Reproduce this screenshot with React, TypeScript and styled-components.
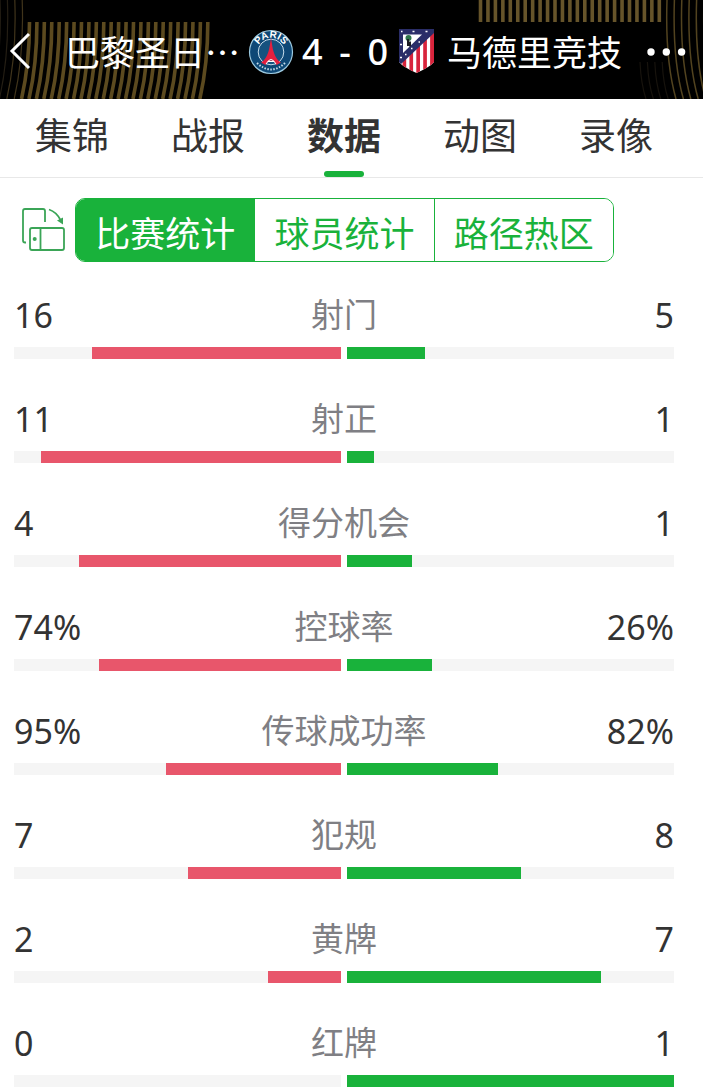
import React from 'react';
import styled, { createGlobalStyle } from 'styled-components';

const GREEN = '#19b23b';
const RED = '#e8566b';

const GlobalStyle = createGlobalStyle`
  *, *::before, *::after { box-sizing: border-box; }
  body {
    margin: 0;
    background: #fff;
    color: #333;
    font-family: "Noto Sans", "Noto Sans CJK SC", sans-serif;
  }
  button { font-family: inherit; cursor: pointer; }
`;

const Page = styled.div`
  width: 100%;
  overflow-x: hidden;
`;

const Header = styled.header`
  position: relative;
  display: flex;
  align-items: center;
  height: 99px;
  padding: 4px 14px 0 8px;
  background: #000;
  color: #fff;
`;

const Backdrop = styled.svg`
  position: absolute;
  inset: 0;
  width: 100%;
  height: 100%;
`;

const IconButton = styled.button`
  position: relative;
  display: flex;
  padding: 0;
  border: 0;
  background: none;
  color: inherit;
`;

const Match = styled.div`
  position: relative;
  flex: 1;
  display: flex;
  align-items: center;
  justify-content: center;
  gap: 8px;
  padding-left: 8px;
`;

const Team = styled.span<{ $away?: boolean }>`
  padding: 0 0 2px ${(p) => (p.$away ? '4px' : '0')};
  font: 400 35px/48px "Noto Sans CJK SC", sans-serif;
  white-space: nowrap;
`;

const Score = styled.strong`
  display: flex;
  justify-content: space-between;
  width: 88px;
  padding-right: 2px;
  font-size: 36px;
  line-height: 48px;
  font-weight: 500;
`;

const Tabs = styled.nav`
  display: flex;
  height: 79px;
  padding: 0 19px 0 4px;
  border-bottom: 1px solid #e8e8e8;
`;

const Tab = styled.button<{ $active?: boolean }>`
  flex: 1;
  display: flex;
  flex-direction: column;
  align-items: center;
  justify-content: space-between;
  padding: 10px 0 0;
  border: 0;
  background: none;
  color: #333;
  font-size: 37px;
  line-height: 54px;
  font-weight: ${(p) => (p.$active ? 700 : 400)};
  white-space: nowrap;

  &::after {
    content: "";
    width: 40px;
    height: 6px;
    border-radius: 3px;
    background: ${(p) => (p.$active ? GREEN : 'transparent')};
  }
`;

const Filter = styled.div`
  display: flex;
  align-items: center;
  gap: 9px;
  padding: 20px 29px 30px 21px;
`;

const Segments = styled.div`
  flex: 0 1 539px;
  display: flex;
  height: 64px;
  border: 1px solid ${GREEN};
  border-radius: 10px;
  overflow: hidden;
`;

const Segment = styled.button<{ $active?: boolean }>`
  flex: 1;
  padding: 8px 0 0;
  border: 0;
  background: ${(p) => (p.$active ? GREEN : '#fff')};
  color: ${(p) => (p.$active ? '#fff' : GREEN)};
  font-size: 35px;
  line-height: 48px;
  white-space: nowrap;

  & + & { border-left: 1px solid ${GREEN}; }
`;

const Stats = styled.main`
  display: flex;
  flex-direction: column;
  gap: 37px;
  padding: 0 29px 3px 14px;
`;

const Stat = styled.section`
  display: grid;
  grid-template-columns: 1fr auto 1fr;
  row-gap: 9px;
`;

const Value = styled.span<{ $right?: boolean }>`
  font-size: 34px;
  line-height: 46px;
  text-align: ${(p) => (p.$right ? 'right' : 'left')};
`;

const Label = styled.h2`
  margin: 0;
  color: #7f7f84;
  font-size: 33px;
  line-height: 46px;
  font-weight: 400;
`;

const Bars = styled.div`
  grid-column: 1 / -1;
  display: grid;
  grid-template-columns: 1fr 1fr;
  gap: 6px;
`;

const Track = styled.div<{ $right?: boolean }>`
  display: flex;
  justify-content: ${(p) => (p.$right ? 'flex-start' : 'flex-end')};
  height: 12px;
  background: #f5f5f5;
`;

const Fill = styled.div<{ $right?: boolean }>`
  background: ${(p) => (p.$right ? GREEN : RED)};
`;

const stats: [string, string, string][] = [
  ['射门', '16', '5'],
  ['射正', '11', '1'],
  ['得分机会', '4', '1'],
  ['控球率', '74%', '26%'],
  ['传球成功率', '95%', '82%'],
  ['犯规', '7', '8'],
  ['黄牌', '2', '7'],
  ['红牌', '0', '1'],
];

const range = (n: number) => Array.from({ length: n }, (_, i) => i);

function Stripes() {
  return (
    <Backdrop viewBox="0 0 703 99" preserveAspectRatio="xMinYMin slice" fill="none" aria-hidden="true">
      {range(25).map((i) => {
        const x = 29.5 + i * 7.43;
        return <path key={i} d={`M${x} 22Q${x} 64 ${x - 8} 99`} stroke="#5c4a1f" strokeWidth="3.6" />;
      })}
      {range(4).map((i) => (
        <path key={i} d={`M${0 + i * 7.4} 0Q${2 + i * 7.4} 55 ${-8 + i * 7.4} 99`} stroke={i > 1 ? '#40341b' : '#241e14'} strokeWidth="1.2" />
      ))}
      {range(25).map((i) => (
        <path key={i} d={`M${480.5 + i * 7.45} 0V22`} stroke="#66542a" strokeWidth="3.6" />
      ))}
      {range(7).map((i) => {
        const x = 667 + i * 7.4;
        return <path key={i} d={`M${x} 0Q${x - 2} 60 ${x + 9} 99`} stroke="#52431f" strokeWidth="1.5" />;
      })}
      {range(4).map((i) => (
        <path key={i} d={`M${640 + i * 7.4} 62Q${641 + i * 7.4} 84 ${646 + i * 7.4} 99`} stroke="#17130d" strokeWidth="1.2" />
      ))}
    </Backdrop>
  );
}

function ParisCrest() {
  return (
    <svg width="46" height="46" viewBox="0 0 46 46" role="img" aria-label="巴黎圣日耳曼">
      <defs><path id="arc" d="M8.8 23A14.2 14.2 0 0 1 37.2 23" /></defs>
      <circle cx="23" cy="23" r="21.500" fill="#0e4876" stroke="#9cc9df" strokeWidth="1.200" />
      <circle cx="23" cy="23" r="12.800" fill="#16527f" stroke="#c5dcea" strokeWidth="1" />
      <path d="M23 9 24.300 17C25.500 25 28.500 31 33 33.500L28.500 36Q23 27 17.500 36L13 33.500C17.500 31 20.500 25 21.700 17Z" fill="#e3203f" />
      <path d="M18 35Q23 26 28 35M20 32.500h6" stroke="#fff" fill="none" />
      <text fontSize="10" fontWeight="700" fill="#fff" textAnchor="middle" fontFamily="Liberation Sans, sans-serif">
        <textPath href="#arc" startOffset="50%">PARIS</textPath>
      </text>
      <path d="M9 34Q23 47 37 34" fill="none" stroke="#c5dcea" strokeWidth="2" strokeDasharray="1.500 1.500" />
    </svg>
  );
}

function AtleticoCrest() {
  return (
    <svg width="37" height="46" viewBox="0 0 37 46" role="img" aria-label="马德里竞技">
      <defs><clipPath id="shield"><path d="M1 0H36V33Q32 38 18.500 44Q5 38 1 33Z" /></clipPath></defs>
      <g clipPath="url(#shield)">
        <path d="M0 0H37V46H0Z" fill="#fff" />
        <path d="M4.500 0h3.700v46h-3.700zM11.400 0h3.700v46h-3.700zM18.300 0h3.700v46h-3.700zM25.200 0h3.700v46h-3.700zM32.100 0h5v46h-5z" fill="#d8243c" />
        <path d="M0 0H37V3L2 36H0Z" fill="#2a2d68" />
        <path d="M5 5.500H24L5 24Z" fill="#fff" />
        <circle cx="10.500" cy="9" r="3" fill="#2e7449" />
        <path d="M10 10v7M12 12.500v5" stroke="#1c1c22" strokeWidth="2" />
        <path d="M3 2.500h1.500M14.500 2.500h2M27.500 2.500h2M2 15.500h2M2 28.500h2M7 25.500h1.500M13 19.500h1.500M20.500 13h1.500" stroke="#fff" strokeWidth="1.500" />
      </g>
    </svg>
  );
}

function RotateIcon() {
  return (
    <svg width="45" height="46" viewBox="0 0 45 46" fill="none" stroke="#3ba557" strokeWidth="1.800" aria-hidden="true">
      <path d="M5 35.500H4Q2 35.500 2 33.500V4Q2 2 4 2H22Q24 2 24 4V15" />
      <rect x="9" y="21" width="34" height="22" rx="2" />
      <path d="M19.500 21V43M28 2.500Q35.500 5 39.500 13" />
      <path d="M36 13.500 42 17.500 42 10.500Z" fill="#3ba557" stroke="none" />
      <circle cx="13.700" cy="32" r="2" fill="#3ba557" stroke="none" />
    </svg>
  );
}

export default function App() {
  return (
    <Page lang="zh-CN">
      <GlobalStyle />
      <Header>
        <Stripes />
        <IconButton aria-label="返回">
          <svg width="26" height="40" viewBox="0 0 26 40" fill="none" stroke="#fff" strokeWidth="3"><path d="M21 2 4 19 21 36" /></svg>
        </IconButton>
        <Match>
          <Team>巴黎圣日…</Team>
          <ParisCrest />
          <Score><span>4</span><span>-</span><span>0</span></Score>
          <AtleticoCrest />
          <Team $away>马德里竞技</Team>
        </Match>
        <IconButton aria-label="更多">
          <svg width="44" height="12" viewBox="0 0 44 12" fill="#fff"><circle cx="6" cy="6" r="3.700" /><circle cx="21.300" cy="6" r="3.700" /><circle cx="36.600" cy="6" r="3.700" /></svg>
        </IconButton>
      </Header>
      <Tabs>
        {['集锦', '战报', '数据', '动图', '录像'].map((t) => (
          <Tab key={t} $active={t === '数据'}>{t}</Tab>
        ))}
      </Tabs>
      <Filter>
        <IconButton aria-label="横屏"><RotateIcon /></IconButton>
        <Segments>
          <Segment $active>比赛统计</Segment>
          <Segment>球员统计</Segment>
          <Segment>路径热区</Segment>
        </Segments>
      </Filter>
      <Stats>
        {stats.map(([label, home, away]) => {
          const h = parseInt(home, 10);
          const a = parseInt(away, 10);
          return (
            <Stat key={label}>
              <Value>{home}</Value>
              <Label>{label}</Label>
              <Value $right>{away}</Value>
              <Bars>
                <Track><Fill style={{ width: `${(h / (h + a)) * 100}%` }} /></Track>
                <Track $right><Fill $right style={{ width: `${(a / (h + a)) * 100}%` }} /></Track>
              </Bars>
            </Stat>
          );
        })}
      </Stats>
    </Page>
  );
}
